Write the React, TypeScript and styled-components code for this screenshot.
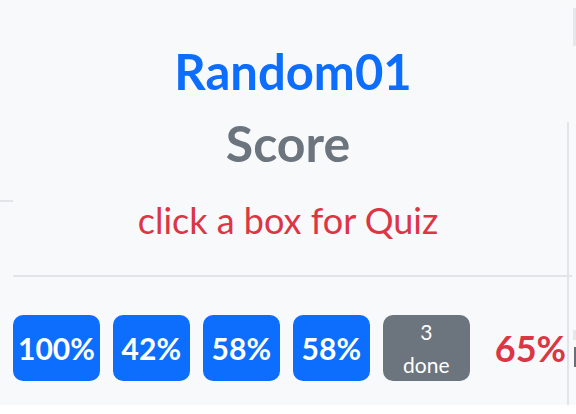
import React from "react";
import styled, { createGlobalStyle } from "styled-components";

const GlobalStyle = createGlobalStyle`
    html, body {
        margin: 0;
        padding: 0;
        background-color: #ffffff;
    }
    body {
        font-family: Lato, "Open Sans", "Liberation Sans", sans-serif;
    }
`;

// Fenêtre entière
const Screen = styled.div`
    width: 576px;
    height: 414px;
    display: flex;
    overflow: hidden;
`;

const Panel = styled.main`
    position: relative;
    width: 567px;
    height: 405px;
    background-color: #f8f9fa;
    display: flex;
    flex-direction: column;

    /* bordure droite de la colonne voisine */
    &::after {
        content: "";
        position: absolute;
        right: -2px;
        top: 122px;
        bottom: 0;
        width: 2px;
        background-color: #e2e4e8;
    }
`;

const Gutter = styled.aside`
    width: 9px;
    height: 405px;
    background-color: #f8f9fa;
    display: flex;
    flex-direction: column;
    align-items: flex-end;
`;

const ScrollBit = styled.span<{ $top: number; $height: number; $color: string; $width?: number }>`
    display: block;
    margin-top: ${(p) => p.$top}px;
    width: ${(p) => p.$width ?? 3}px;
    height: ${(p) => p.$height}px;
    background-color: ${(p) => p.$color};
`;

const Header = styled.header`
    position: relative;
    height: 275px;
    padding: 42px 0 0 19px;
    box-sizing: border-box;
    display: flex;
    flex-direction: column;
    align-items: center;

    &::before {
        content: "";
        position: absolute;
        left: 0;
        top: 200px;
        width: 13px;
        height: 2px;
        background-color: #e2e4e8;
    }
`;

const QuizName = styled.h1`
    margin: 0;
    color: #0d6efd;
    font-size: 49px;
    font-weight: 700;
    line-height: 1.2;
`;

const ScoreTitle = styled.h2`
    margin: 12px 0 0 -10px;
    color: #6c757d;
    font-size: 50px;
    font-weight: 700;
    line-height: 1.2;
`;

const Hint = styled.p`
    margin: 26px 0 0 -10px;
    color: #dc3545;
    font-size: 36px;
    font-weight: 400;
    line-height: 1.2;
`;

const Divider = styled.hr`
    margin: 0 -5px 0 13px;
    border: none;
    height: 2px;
    background-color: #e2e4e8;
`;

const ScoreRow = styled.div`
    display: flex;
    align-items: center;
    gap: 13px;
    margin-top: 38px;
    padding-left: 13px;
`;

const ScoreBox = styled.button<{ $done?: boolean }>`
    min-width: ${(p) => (p.$done ? 87 : 77)}px;
    height: 66px;
    padding: 0 5px;
    border: none;
    border-radius: 10px;
    background-color: ${(p) => (p.$done ? "#6c757d" : "#0d6efd")};
    color: #ffffff;
    font-family: inherit;
    font-size: ${(p) => (p.$done ? 21 : 30)}px;
    font-weight: ${(p) => (p.$done ? 400 : 700)};
    line-height: ${(p) => (p.$done ? "33px" : "1")};
    cursor: pointer;
    display: flex;
    flex-direction: column;
    align-items: center;
    justify-content: center;
`;

const Average = styled.span`
    margin-left: 12px;
    color: #dc3545;
    font-size: 36px;
    font-weight: 700;
`;

const scores = ["100%", "42%", "58%", "58%"];

export default function App() {
    return (
        <>
            <GlobalStyle />
            <Screen>
                <Panel>
                    <Header>
                        <QuizName>Random01</QuizName>
                        <ScoreTitle>Score</ScoreTitle>
                        <Hint>click a box for Quiz</Hint>
                    </Header>
                    <Divider />
                    <ScoreRow>
                        {scores.map((s, i) => (
                            <ScoreBox key={i}>{s}</ScoreBox>
                        ))}
                        <ScoreBox $done>
                            <span>3</span>
                            <span>done</span>
                        </ScoreBox>
                        <Average>65%</Average>
                    </ScoreRow>
                </Panel>
                <Gutter>
                    <ScrollBit $top={8} $height={38} $color="#e6e7ea" />
                    <ScrollBit $top={284} $height={10} $color="#e6e7ea" />
                    <ScrollBit $top={7} $height={20} $color="#6b6f75" $width={2} />
                </Gutter>
            </Screen>
        </>
    );
}
